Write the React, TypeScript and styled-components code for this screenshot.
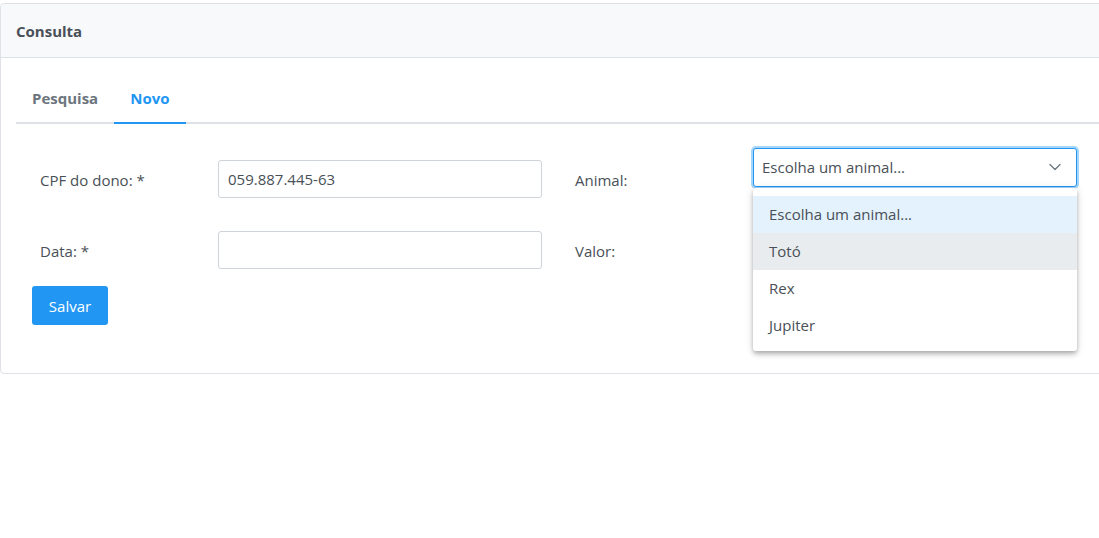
import React from "react";
import styled, { createGlobalStyle } from "styled-components";
import { ChevronDown } from "lucide-react";

const GlobalStyle = createGlobalStyle`
  html, body { margin: 0; padding: 0; background: #ffffff; overflow: hidden; }
  body {
    font-family: "Open Sans", "Noto Sans", "Liberation Sans", sans-serif;
    font-size: 15px;
    color: #495057;
  }
  * { box-sizing: border-box; }
`;

const Card = styled.section`
  margin-top: 3px;
  width: calc(100% + 12px);
  border: 1px solid #dee2e6;
  border-radius: 4px;
  background: #ffffff;
`;

const CardHeader = styled.header`
  height: 54px;
  display: flex;
  align-items: center;
  padding: 1px 15px 0;
  background: #f8f9fa;
  border-bottom: 1px solid #dee2e6;
  border-radius: 4px 4px 0 0;
  font-weight: 700;
  font-size: 15px;
  color: #495057;
`;

const CardBody = styled.div`
  padding: 16px 0 48px 15px;
  width: 1099px;
`;

const TabNav = styled.nav`
  display: flex;
  border-bottom: 2px solid #dee2e6;
  width: 1084px;
`;

const Tab = styled.div<{ $active?: boolean }>`
  height: 50px;
  margin-bottom: -2px;
  padding: 0 16px;
  display: flex;
  align-items: center;
  font-weight: 700;
  font-size: 15px;
  color: ${(p) => (p.$active ? "#2196F3" : "#6c757d")};
  border-bottom: 2px solid ${(p) => (p.$active ? "#2196F3" : "transparent")};
`;

const Form = styled.form`
  padding: 36px 0 0 16px;
  display: flex;
  flex-direction: column;
`;

const Row = styled.div`
  display: flex;
  align-items: center;
  gap: 33px;
  margin-bottom: 33px;
  &:nth-child(2) { margin-bottom: 17px; }
`;

const Field = styled.div`
  display: flex;
  align-items: center;
`;

const Label = styled.label`
  width: 186px;
  padding-left: 8px;
  padding-top: 2px;
  font-size: 15px;
  color: #495057;
`;

const LabelRight = styled(Label)`
  width: 178px;
  padding-left: 0;
`;

const TextInput = styled.input`
  width: 324px;
  height: 38px;
  padding: 0 9px;
  border: 1px solid #ced4da;
  border-radius: 3px;
  font-family: inherit;
  font-size: 15px;
  color: #495057;
  background: #ffffff;
  outline: none;
`;

const SelectWrap = styled.div`
  position: relative;
  width: 324px;
  margin-top: -24px;
`;

const SelectBox = styled.div`
  height: 39px;
  display: flex;
  align-items: center;
  justify-content: space-between;
  padding: 0 11px 0 8px;
  border: 1px solid #2196F3;
  border-radius: 3px;
  box-shadow: 0 0 0 2px #a6d5fa;
  color: #495057;
  font-size: 15px;
  background: #ffffff;
`;

const Panel = styled.ul`
  position: absolute;
  top: 40px;
  left: 0;
  width: 324px;
  margin: 0;
  padding: 8px 0 7px;
  list-style: none;
  background: #ffffff;
  border-radius: 3px;
  box-shadow: 0 2px 4px -1px rgba(0, 0, 0, 0.2), 0 4px 5px 0 rgba(0, 0, 0, 0.14),
    0 1px 10px 0 rgba(0, 0, 0, 0.12);
  z-index: 2;
`;

const Option = styled.li<{ $state?: "selected" | "hover" }>`
  height: 37px;
  display: flex;
  align-items: center;
  padding: 0 16px;
  font-size: 15px;
  color: #495057;
  background: ${(p) =>
    p.$state === "selected" ? "#e3f2fd" : p.$state === "hover" ? "#e9ecef" : "transparent"};
`;

const Button = styled.button`
  align-self: flex-start;
  width: 76px;
  height: 39px;
  border: none;
  border-radius: 3px;
  background: #2196F3;
  color: #ffffff;
  font-family: inherit;
  font-size: 15px;
  padding: 0;
`;

export default function App() {
  return (
    <>
      <GlobalStyle />
      <Card>
        <CardHeader>Consulta</CardHeader>
        <CardBody>
          <TabNav>
            <Tab>Pesquisa</Tab>
            <Tab $active>Novo</Tab>
          </TabNav>
          <Form onSubmit={(e) => e.preventDefault()}>
            <Row>
              <Field>
                <Label>CPF do dono: *</Label>
                <TextInput defaultValue="059.887.445-63" />
              </Field>
              <Field>
                <LabelRight>Animal:</LabelRight>
                <SelectWrap>
                  <SelectBox>
                    <span>Escolha um animal...</span>
                    <ChevronDown size={20} color="#6c757d" strokeWidth={1.5} />
                  </SelectBox>
                  <Panel>
                    <Option $state="selected">Escolha um animal...</Option>
                    <Option $state="hover">Totó</Option>
                    <Option>Rex</Option>
                    <Option>Jupiter</Option>
                  </Panel>
                </SelectWrap>
              </Field>
            </Row>
            <Row>
              <Field>
                <Label>Data: *</Label>
                <TextInput />
              </Field>
              <Field>
                <LabelRight>Valor:</LabelRight>
              </Field>
            </Row>
            <Button type="submit">Salvar</Button>
          </Form>
        </CardBody>
      </Card>
    </>
  );
}
